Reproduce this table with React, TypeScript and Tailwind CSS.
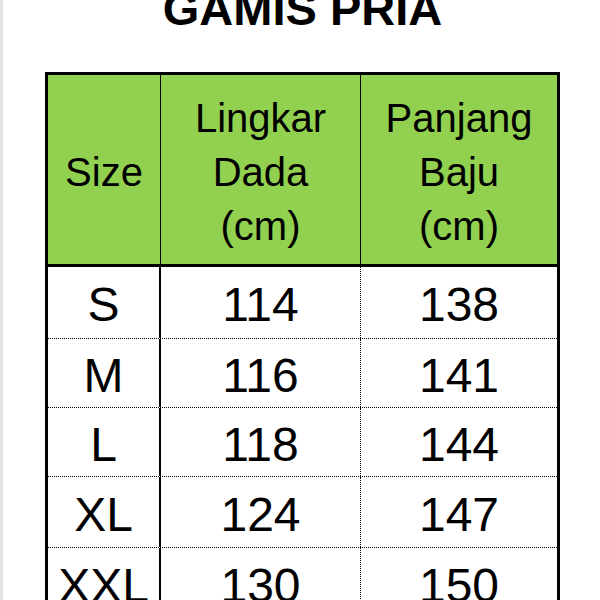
const rows = [
  { size: "S", dada: "114", baju: "138", h: "h-[72px]" },
  { size: "M", dada: "116", baju: "141", h: "h-[69px]" },
  { size: "L", dada: "118", baju: "144", h: "h-[69px]" },
  { size: "XL", dada: "124", baju: "147", h: "h-[71px]" },
  { size: "XXL", dada: "130", baju: "150", h: "h-[72px]" },
];

export default function App() {
  return (
    <div
      className="flex h-[600px] w-[600px] overflow-hidden bg-white text-black"
      style={{ fontFamily: '"Liberation Sans", Arial, sans-serif' }}
    >
      <div className="w-[3px] shrink-0 bg-[#e3e3e3]" />
      <div className="flex flex-col pl-[42px]">
        <h1 className="-mt-[15px] w-[515px] text-center text-[47px] font-bold leading-[47px]">
          GAMIS PRIA
        </h1>
        <div className="mt-[40px] w-[515px] border-[3px] border-black">
          <div className="flex h-[192px] border-b-[3px] border-black bg-[#92d050] text-[40px] leading-[54px]">
            <div className="flex w-[113px] items-center justify-center border-r border-black pt-[4px]">
              Size
            </div>
            <div className="flex w-[200px] items-center justify-center border-r border-black pt-[4px] text-center">
              Lingkar
              <br />
              Dada
              <br />
              (cm)
            </div>
            <div className="flex flex-1 items-center justify-center pt-[4px] text-center">
              Panjang
              <br />
              Baju
              <br />
              (cm)
            </div>
          </div>
          {rows.map((r) => (
            <div
              key={r.size}
              className={"flex border-b border-dotted border-black text-[48px] leading-none " + r.h}
            >
              <div className="flex w-[113px] items-center justify-center border-r-2 border-black pt-[5px]">
                {r.size}
              </div>
              <div className="flex w-[200px] items-center justify-center border-r border-dotted border-black pt-[5px]">
                {r.dada}
              </div>
              <div className="flex flex-1 items-center justify-center pt-[5px]">{r.baju}</div>
            </div>
          ))}
        </div>
      </div>
    </div>
  );
}
